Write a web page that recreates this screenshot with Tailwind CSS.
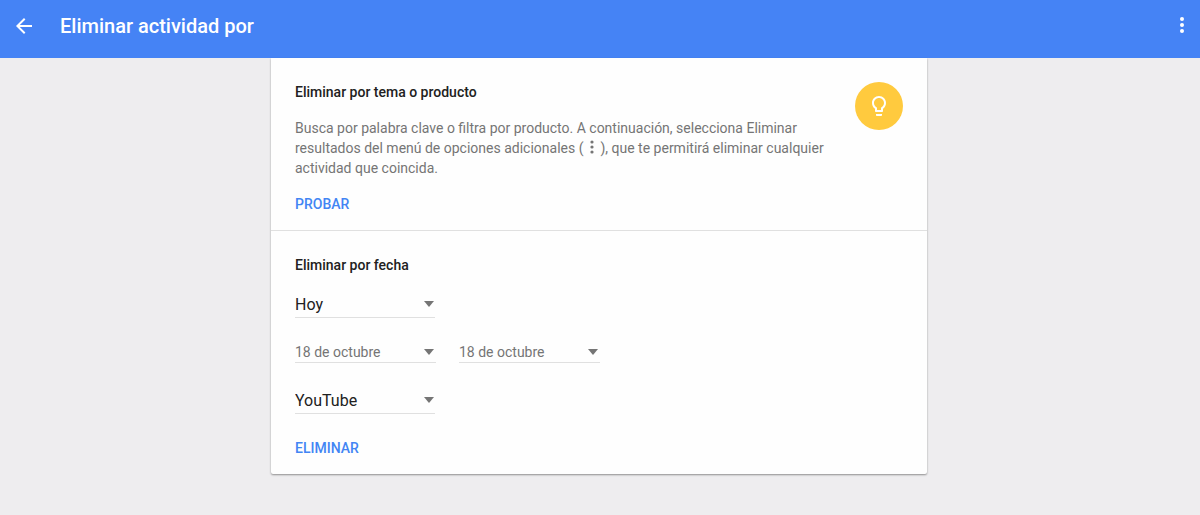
<!DOCTYPE html>
<html lang="es">
<head>
    <meta charset="UTF-8">
    <meta name="viewport" content="width=device-width, initial-scale=1.0">
    <title>Eliminar actividad por</title>
    <script src="https://cdn.jsdelivr.net/npm/@tailwindcss/browser@4"></script>
</head>
<body class="bg-[#eeedef] min-h-screen font-['Roboto',sans-serif] text-sm text-[#212121]">
<header class="bg-[#4583f5] text-white flex items-center pt-3.5 pb-5 pl-3 pr-1.5">
    <button type="button" aria-label="Atrás">
        <svg class="size-6" viewBox="0 0 24 24" fill="currentColor"><path d="M20 11H7.83l5.59-5.59L12 4l-8 8 8 8 1.41-1.41L7.83 13H20v-2z"/></svg>
    </button>
    <h1 class="ml-6 flex-1 text-xl leading-6 font-medium">Eliminar actividad por</h1>
    <button type="button" aria-label="Más opciones">
        <svg class="size-6" viewBox="0 0 24 24" fill="currentColor"><circle cx="12" cy="5" r="2"/><circle cx="12" cy="11" r="2"/><circle cx="12" cy="17" r="2"/></svg>
    </button>
</header>

<div class="pr-0.5">
<main class="max-w-[656px] mx-auto bg-[#fefefe] rounded-b-xs shadow-[0_1px_2px_rgba(0,0,0,0.4)]">
    <section class="flex justify-between px-6 pt-6 pb-4 border-b border-[#e0e0e0]">
        <div class="max-w-[536px]">
            <h2 class="leading-5 font-medium">Eliminar por tema o producto</h2>
            <p class="my-4 leading-5 text-[#757575]">Busca por palabra clave o filtra por producto. A continuación, selecciona Eliminar resultados del menú de opciones adicionales ( <svg class="inline w-2.5 h-3.5 align-[-1px]" viewBox="0 0 10 14" fill="currentColor"><circle cx="5" cy="2" r="1.6"/><circle cx="5" cy="7" r="1.6"/><circle cx="5" cy="12" r="1.6"/></svg> ), que te permitirá eliminar cualquier actividad que coincida.</p>
            <button type="button" class="block leading-5 font-medium text-[#4285f4]">PROBAR</button>
        </div>
        <div class="size-12 shrink-0 rounded-full bg-[#ffca3e] text-white flex items-center justify-center">
            <svg class="size-6" viewBox="0 0 24 24" fill="currentColor"><path d="M9 21c0 .55.45 1 1 1h4c.55 0 1-.45 1-1v-1H9v1zm3-19C8.14 2 5 5.14 5 9c0 2.38 1.19 4.47 3 5.74V17c0 .55.45 1 1 1h6c.55 0 1-.45 1-1v-2.26c1.81-1.27 3-3.36 3-5.74 0-3.86-3.14-7-7-7zm2.85 11.1l-.85.6V16h-4v-2.3l-.85-.6C7.8 12.16 7 10.63 7 9c0-2.76 2.24-5 5-5s5 2.24 5 5c0 1.63-.8 3.16-2.15 4.1z"/></svg>
        </div>
    </section>

    <form class="px-6 pt-6 pb-4">
        <h2 class="leading-5 font-medium">Eliminar por fecha</h2>
        <div class="relative mt-4.5 w-[140px] border-b border-[#e0e0e0]">
            <select aria-label="Periodo" class="block w-full h-6 appearance-none text-base leading-6">
                <option>Hoy</option>
            </select>
            <svg class="absolute right-px top-2 w-2.5 h-1.5 pointer-events-none text-[#757575]" viewBox="0 0 10 6" fill="currentColor"><path d="M0 0h10L5 6z"/></svg>
        </div>
        <div class="mt-6 flex gap-6 text-[#757575]">
            <button type="button" aria-label="Desde: 18 de octubre" class="flex items-center justify-between w-[141px] -mr-px pr-0.5 leading-5 border-b border-[#e0e0e0]">
                18 de octubre
                <svg class="w-2.5 h-1.5" viewBox="0 0 10 6" fill="currentColor"><path d="M0 0h10L5 6z"/></svg>
            </button>
            <button type="button" aria-label="Hasta: 18 de octubre" class="flex items-center justify-between w-[141px] pr-0.5 leading-5 border-b border-[#e0e0e0]">
                18 de octubre
                <svg class="w-2.5 h-1.5" viewBox="0 0 10 6" fill="currentColor"><path d="M0 0h10L5 6z"/></svg>
            </button>
        </div>
        <div class="relative mt-6.5 w-[140px] border-b border-[#e0e0e0]">
            <select aria-label="Producto" class="block w-full h-6 appearance-none text-base leading-6">
                <option>YouTube</option>
            </select>
            <svg class="absolute right-px top-2 w-2.5 h-1.5 pointer-events-none text-[#757575]" viewBox="0 0 10 6" fill="currentColor"><path d="M0 0h10L5 6z"/></svg>
        </div>
        <button type="button" class="block mt-6 leading-5 font-medium text-[#4285f4]">ELIMINAR</button>
    </form>
</main>
</div>
</body>
</html>
